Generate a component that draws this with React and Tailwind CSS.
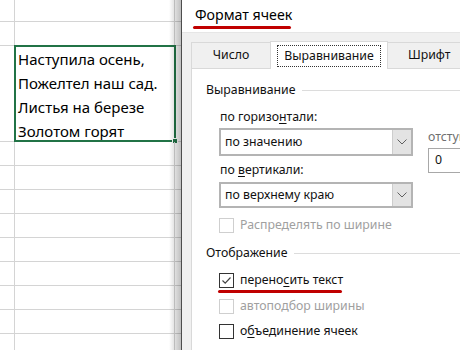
import React from "react";

const rowHeights = [22, 24, 96, 24, 24, 24, 24, 24, 24, 24, 24, 24];

function Chevron() {
  return (
    <svg width="10" height="6" viewBox="0 0 10 6" fill="none">
      <path d="M0.5 0.5 L5 5 L9.5 0.5" stroke="#606060" strokeWidth="1" />
    </svg>
  );
}

function Select({ value, h }) {
  return (
    <div className={`flex ${h} border-2 border-[#b4b4b4] bg-white`}>
      <div className="flex-1 flex items-center pl-[4px] text-[#111]">{value}</div>
      <div className="w-[19px] flex items-center justify-center bg-[#e3e3e3] border-l border-[#cdcdcd]">
        <Chevron />
      </div>
    </div>
  );
}

function Checkbox({ checked, disabled }) {
  return (
    <div
      className={`w-[15px] h-[15px] shrink-0 flex items-center justify-center bg-white border ${
        disabled ? "border-[#cfcfcf]" : "border-[#333]"
      }`}
    >
      {checked && (
        <svg width="13" height="13" viewBox="0 0 13 13" fill="none">
          <path d="M2.5 6.5 L5.2 9.2 L10.5 3.5" stroke="#444" strokeWidth="1.2" />
        </svg>
      )}
    </div>
  );
}

function GroupHeader({ title, className }) {
  return (
    <div className={`flex items-center h-[20px] ${className}`}>
      <span className="text-[#111]">{title}</span>
      <div className="flex-1 h-px bg-[#dcdcdc] ml-[6px]" />
    </div>
  );
}

export default function App() {
  return (
    <div className="w-[460px] h-[350px] flex overflow-hidden bg-white font-['Noto_Sans',sans-serif]">
      {/* sheet */}
      <div className="relative w-[181px] shrink-0 h-full flex flex-col overflow-hidden">
        {rowHeights.map((h, i) => (
          <div
            key={i}
            className="flex shrink-0 border-b border-[#d4d4d4]"
            style={{ height: h }}
          >
            <div className="w-[15px] shrink-0 border-r border-[#d4d4d4]" />
            <div className="relative w-[160px] shrink-0 border-r border-[#d4d4d4]">
              {i === 2 && (
                <>
                  <div className="pl-[3px] pt-px text-[15px] leading-[24px] text-black whitespace-nowrap">
                    <div>Наступила осень,</div>
                    <div>Пожелтел наш сад.</div>
                    <div>Листья на березе</div>
                    <div>Золотом горят</div>
                  </div>
                  <div className="absolute -left-px -top-px -right-[2px] -bottom-px border-2 border-[#217346]">
                    <div className="absolute -right-[4px] -bottom-[4px] w-[6px] h-[6px] bg-[#217346] border border-white" />
                  </div>
                </>
              )}
            </div>
            <div className="flex-1" />
          </div>
        ))}
        <div className="absolute top-0 right-0 w-[12px] h-full bg-gradient-to-r from-transparent to-black/25" />
      </div>

      {/* dialog */}
      <div className="flex-1 min-w-0 overflow-hidden flex flex-col border-l border-[#4d4d4d] text-[12.3px]">
        <div className="h-[32px] shrink-0 bg-white pl-[13px] pt-[4px]">
          <div className="relative inline-block text-[14.2px] leading-[22px] text-black">
            Формат ячеек
            <div className="absolute -left-[2px] top-[22px] w-[98px] h-[3px] rounded-full bg-[#c00000]" />
          </div>
        </div>
        <div className="flex-1 flex flex-col bg-[#f0f0f0] pl-[9px] border-t border-[#e6e6e6]">
          <div className="h-[35px] shrink-0 flex items-end whitespace-nowrap">
            <div className="w-[79px] h-[26px] shrink-0 flex items-center justify-center border-l border-t border-[#d9d9d9] text-[#111]">
              Число
            </div>
            <div className="relative z-10 w-[118px] h-[28px] shrink-0 -mb-px flex items-center justify-center bg-white border-l border-t border-r border-[#d9d9d9] text-[#111]">
              <span className="px-[6px] border border-dotted border-[#333] leading-[20px]">
                Выравнивание
              </span>
            </div>
            <div className="w-[90px] h-[26px] shrink-0 flex items-center pl-[20px] border-t border-[#d9d9d9] text-[#111]">
              Шрифт
            </div>
          </div>
          <div className="flex-1 bg-white border-l border-t border-[#d9d9d9] pl-[14px] whitespace-nowrap">
            <GroupHeader title="Выравнивание" className="mt-[11px]" />
            <div className="flex pl-[13px]">
              <div className="w-[194px] shrink-0 flex flex-col">
                <div className="mt-[7px] h-[20px] leading-[20px] pl-px text-[#111]">
                  по горизо<u className="underline-offset-2">н</u>тали:
                </div>
                <div className="mt-px">
                  <Select value="по значению" h="h-[28px]" />
                </div>
                <div className="mt-[4px] h-[20px] leading-[20px] pl-px text-[#111]">
                  по <u className="underline-offset-2">в</u>ертикали:
                </div>
                <div className="mt-[2px]">
                  <Select value="по верхнему краю" h="h-[26px]" />
                </div>
              </div>
              <div className="ml-[15px] pt-[27px] flex flex-col shrink-0">
                <div className="h-[20px] leading-[20px] text-[#6f6f6f]">отступ:</div>
                <div className="mt-px w-[60px] h-[25px] flex items-center pl-[6px] border border-[#a8a8a8] text-[#111]">
                  0
                </div>
              </div>
            </div>
            <div className="pl-[13px] mt-[7px] h-[20px] flex items-center gap-[6px] text-[#a0a0a0]">
              <Checkbox disabled />
              <span>Распределять по ширине</span>
            </div>
            <GroupHeader title="Отображение" className="mt-[8px]" />
            <div className="relative pl-[13px] mt-[7px] h-[20px] flex items-center gap-[6px] text-[#111]">
              <Checkbox checked />
              <span>
                перено<u className="underline-offset-2">с</u>ить текст
              </span>
              <div className="absolute left-[12px] top-[20px] w-[124px] h-[3px] rounded-full bg-[#c00000]" />
            </div>
            <div className="pl-[13px] mt-[6px] h-[20px] flex items-center gap-[6px] text-[#a0a0a0]">
              <Checkbox disabled />
              <span>автоподбор ширины</span>
            </div>
            <div className="pl-[13px] mt-[5px] h-[20px] flex items-center gap-[6px] text-[#111]">
              <Checkbox />
              <span>
                о<u className="underline-offset-2">б</u>ъединение ячеек
              </span>
            </div>
          </div>
        </div>
      </div>
    </div>
  );
}
